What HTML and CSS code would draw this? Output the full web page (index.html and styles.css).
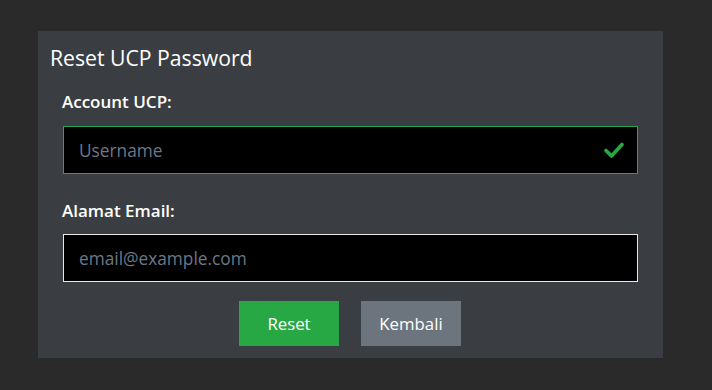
FILE: index.html
```html
<!DOCTYPE html>
<html>
<head>
<meta charset="utf-8">
<link rel="stylesheet" href="styles.css">
</head>
<body>
<div class="card">
  <h1 class="title">Reset UCP Password</h1>
  <form class="form">
    <label class="label label-first">Account UCP:</label>
    <div class="field valid">
      <input class="input" type="text" placeholder="Username">
      <svg class="check" viewBox="0 0 20 16" width="20" height="16"><path d="M2 8.5 L7.5 14 L18 2.5" fill="none" stroke="#28a745" stroke-width="3.6" stroke-linecap="round" stroke-linejoin="round"/></svg>
    </div>
    <label class="label label-second">Alamat Email:</label>
    <div class="field">
      <input class="input" type="email" placeholder="email@example.com">
    </div>
    <div class="actions">
      <button type="button" class="btn btn-green">Reset</button>
      <button type="button" class="btn btn-grey">Kembali</button>
    </div>
  </form>
</div>
</body>
</html>
```
FILE: styles.css
```css
html, body {
  margin: 0;
  padding: 0;
}
body {
  background: #2a2a2a;
  width: 712px;
  height: 390px;
  padding: 31px 0 0 38px;
  box-sizing: border-box;
  font-family: "Open Sans", "Noto Sans", sans-serif;
}
.card {
  width: 625px;
  height: 327px;
  box-sizing: border-box;
  background: #3a3e42;
  padding: 12px 25px 12px 12px;
}
.title {
  margin: 0;
  font-size: 21.2px;
  line-height: 30px;
  font-weight: 400;
  color: #ffffff;
}
.form {
  display: flex;
  flex-direction: column;
  padding-left: 13px;
}
.label {
  display: block;
  font-size: 17px;
  line-height: 24px;
  font-weight: 600;
  color: #ffffff;
  margin-left: -1px;
}
.label-first { margin-top: 17px; margin-bottom: 12px; }
.label-second { margin-top: 25px; margin-bottom: 11px; }
.field {
  position: relative;
  width: 575px;
  height: 48px;
  box-sizing: border-box;
  border: 1px solid #e8e8e8;
  background: #000;
}
.field.valid {
  border-color: #28a745;
}
.input {
  width: 100%;
  height: 100%;
  box-sizing: border-box;
  border: 0;
  outline: none;
  background: transparent;
  padding: 0 15px;
  font-family: "Open Sans", "Noto Sans", sans-serif;
  font-size: 17.3px;
  color: #fff;
}
.input::placeholder {
  color: #6c7889;
}
.check {
  position: absolute;
  right: 13px;
  top: 15px;
}
.actions {
  display: flex;
  justify-content: center;
  gap: 22px;
  margin-top: 19px;
  padding-right: 1px;
}
.btn {
  width: 100px;
  height: 45px;
  border: 0;
  border-radius: 0;
  color: #fff;
  font-family: "Open Sans", "Noto Sans", sans-serif;
  font-size: 16.8px;
  cursor: pointer;
}
.btn-green { background: #28a745; }
.btn-grey { background: #6c757d; }
```
